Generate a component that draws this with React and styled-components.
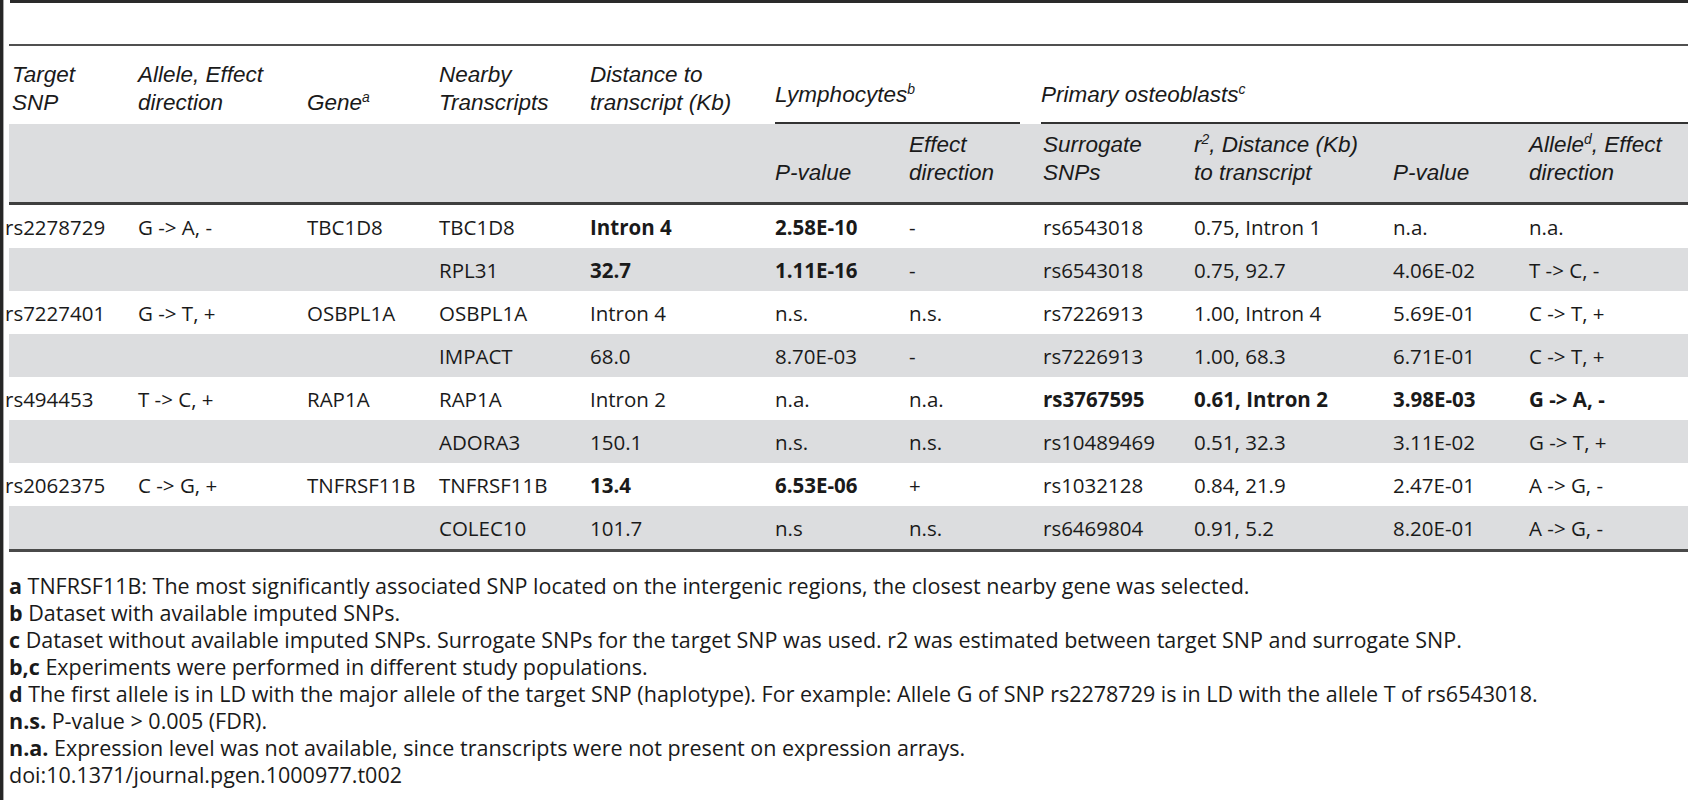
import React from 'react';
import styled, { createGlobalStyle } from 'styled-components';

const COLS = '129px 169px 132px 151px 185px 134px 134px 151px 199px 136px 159px';
const SHADE = '#dcdddf';

const GlobalStyle = createGlobalStyle`
  html, body {
    margin: 0;
    padding: 0;
    background: #fff;
  }
  body {
    font-family: "Open Sans", Lato, "Liberation Sans", sans-serif;
    font-size: 20.5px;
    color: #1a1a1a;
    overflow: hidden;
  }
`;

const Page = styled.div`
  display: flex;
  width: 1688px;
  height: 800px;
  overflow: hidden;
`;

const EdgeBar = styled.div`
  flex: 0 0 3px;
  background: #262626;
  border-right: 1px solid #a8a8a8;
`;

const Sheet = styled.div`
  flex: 1;
  margin-left: 5px;
  display: flex;
  flex-direction: column;
  min-width: 0;
`;

const TopRule = styled.div`
  height: 3px;
  margin-left: 1px;
  background: #2a2a2a;
`;

const Table = styled.div`
  margin-top: 41px;
  border-top: 2px solid #505050;
  border-bottom: 3px solid #4a4a4a;
`;

const HeadRow = styled.div`
  display: grid;
  grid-template-columns: ${COLS};
  height: 78px;
  font-family: "Liberation Sans", Arial, sans-serif;
  font-style: italic;
  font-size: 22.5px;
`;

const SubHeadRow = styled(HeadRow)`
  box-sizing: border-box;
  height: 81px;
  background: ${SHADE};
  border-bottom: 3px solid #3f3f3f;
`;

const HeadCell = styled.div`
  display: flex;
  flex-direction: column;
  justify-content: flex-end;
  padding-bottom: ${(p) => p.$pb}px;
  padding-left: ${(p) => (p.$first ? 3 : 0)}px;
  line-height: 28px;
  white-space: nowrap;
`;

const SpanHead = styled.div`
  grid-column: ${(p) => p.$col} / span ${(p) => p.$span};
  align-self: end;
  margin: 0 ${(p) => p.$mr || 0}px 0 ${(p) => p.$ml || 0}px;
  padding-bottom: 13px;
  border-bottom: 2px solid #333;
  line-height: 28px;
  white-space: nowrap;
`;

const Sup = styled.sup`
  font-size: 0.62em;
  line-height: 0;
  vertical-align: 0.55em;
  font-style: italic;
`;

const BodyRow = styled.div`
  display: grid;
  grid-template-columns: ${COLS};
  height: 43px;
  align-items: center;
  background: ${(p) => (p.$shade ? SHADE : '#fff')};
`;

const Cell = styled.div`
  font-weight: ${(p) => (p.$bold ? 700 : 400)};
  margin-left: ${(p) => (p.$first ? -4 : 0)}px;
  white-space: nowrap;
`;

const Notes = styled.div`
  margin-top: 20px;
  font-size: 21.5px;
  line-height: 27px;
`;

const Note = styled.div`
  white-space: nowrap;
`;

const Label = styled.b`
  font-weight: 700;
`;

// a leading * marks a bold cell
const rows = [
  ['rs2278729', 'G -> A, -', 'TBC1D8', 'TBC1D8', '*Intron 4', '*2.58E-10', '-', 'rs6543018', '0.75, Intron 1', 'n.a.', 'n.a.'],
  ['', '', '', 'RPL31', '*32.7', '*1.11E-16', '-', 'rs6543018', '0.75, 92.7', '4.06E-02', 'T -> C, -'],
  ['rs7227401', 'G -> T, +', 'OSBPL1A', 'OSBPL1A', 'Intron 4', 'n.s.', 'n.s.', 'rs7226913', '1.00, Intron 4', '5.69E-01', 'C -> T, +'],
  ['', '', '', 'IMPACT', '68.0', '8.70E-03', '-', 'rs7226913', '1.00, 68.3', '6.71E-01', 'C -> T, +'],
  ['rs494453', 'T -> C, +', 'RAP1A', 'RAP1A', 'Intron 2', 'n.a.', 'n.a.', '*rs3767595', '*0.61, Intron 2', '*3.98E-03', '*G -> A, -'],
  ['', '', '', 'ADORA3', '150.1', 'n.s.', 'n.s.', 'rs10489469', '0.51, 32.3', '3.11E-02', 'G -> T, +'],
  ['rs2062375', 'C -> G, +', 'TNFRSF11B', 'TNFRSF11B', '*13.4', '*6.53E-06', '+', 'rs1032128', '0.84, 21.9', '2.47E-01', 'A -> G, -'],
  ['', '', '', 'COLEC10', '101.7', 'n.s', 'n.s.', 'rs6469804', '0.91, 5.2', '8.20E-01', 'A -> G, -'],
];

const notes = [
  ['a', 'TNFRSF11B: The most significantly associated SNP located on the intergenic regions, the closest nearby gene was selected.'],
  ['b', 'Dataset with available imputed SNPs.'],
  ['c', 'Dataset without available imputed SNPs. Surrogate SNPs for the target SNP was used. r2 was estimated between target SNP and surrogate SNP.'],
  ['b,c', 'Experiments were performed in different study populations.'],
  ['d', 'The first allele is in LD with the major allele of the target SNP (haplotype). For example: Allele G of SNP rs2278729 is in LD with the allele T of rs6543018.'],
  ['n.s.', 'P-value > 0.005 (FDR).'],
  ['n.a.', 'Expression level was not available, since transcripts were not present on expression arrays.'],
];

export default function App() {
  return (
    <Page>
      <GlobalStyle />
      <EdgeBar />
      <Sheet>
        <TopRule />
        <Table>
          <HeadRow>
            <HeadCell $pb={7} $first>
              <span>Target</span>
              <span>SNP</span>
            </HeadCell>
            <HeadCell $pb={7}>
              <span>Allele, Effect</span>
              <span>direction</span>
            </HeadCell>
            <HeadCell $pb={7}>
              <span>
                Gene<Sup>a</Sup>
              </span>
            </HeadCell>
            <HeadCell $pb={7}>
              <span>Nearby</span>
              <span>Transcripts</span>
            </HeadCell>
            <HeadCell $pb={7}>
              <span>Distance to</span>
              <span>transcript (Kb)</span>
            </HeadCell>
            <SpanHead $col={6} $span={2} $mr={23}>
              Lymphocytes<Sup>b</Sup>
            </SpanHead>
            <SpanHead $col={8} $span={4} $ml={-2}>
              Primary osteoblasts<Sup>c</Sup>
            </SpanHead>
          </HeadRow>
          <SubHeadRow>
            <HeadCell />
            <HeadCell />
            <HeadCell />
            <HeadCell />
            <HeadCell />
            <HeadCell $pb={15}>
              <span>P-value</span>
            </HeadCell>
            <HeadCell $pb={15}>
              <span>Effect</span>
              <span>direction</span>
            </HeadCell>
            <HeadCell $pb={15}>
              <span>Surrogate</span>
              <span>SNPs</span>
            </HeadCell>
            <HeadCell $pb={15}>
              <span>
                r<Sup>2</Sup>, Distance (Kb)
              </span>
              <span>to transcript</span>
            </HeadCell>
            <HeadCell $pb={15}>
              <span>P-value</span>
            </HeadCell>
            <HeadCell $pb={15}>
              <span>
                Allele<Sup>d</Sup>, Effect
              </span>
              <span>direction</span>
            </HeadCell>
          </SubHeadRow>
          {rows.map((row, i) => (
            <BodyRow key={i} $shade={i % 2 === 1}>
              {row.map((v, j) => {
                const bold = v.startsWith('*');
                return (
                  <Cell key={j} $bold={bold} $first={j === 0}>
                    {bold ? v.slice(1) : v}
                  </Cell>
                );
              })}
            </BodyRow>
          ))}
        </Table>
        <Notes>
          {notes.map(([label, text]) => (
            <Note key={label}>
              <Label>{label}</Label> {text}
            </Note>
          ))}
          <Note>doi:10.1371/journal.pgen.1000977.t002</Note>
        </Notes>
      </Sheet>
    </Page>
  );
}
